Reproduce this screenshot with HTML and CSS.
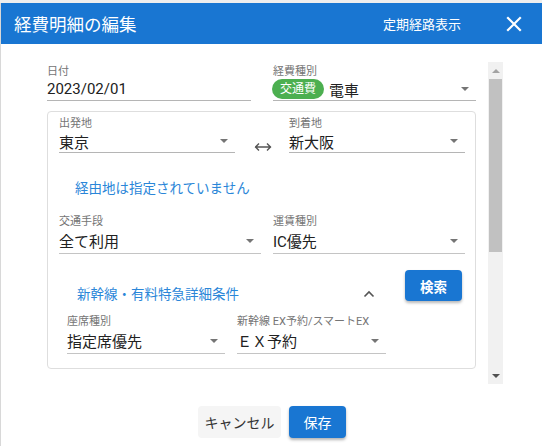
FILE: index.html
```html
<!DOCTYPE html>
<html lang="ja">
<head>
<meta charset="utf-8">
<title>経費明細の編集</title>
<link rel="stylesheet" href="styles.css">
</head>
<body>
<div class="dialog">
  <header class="dlg-head">
    <h1 class="dlg-title">経費明細の編集</h1>
    <div class="head-actions">
      <span class="head-link">定期経路表示</span>
      <svg class="close-icon" width="16" height="16" viewBox="0 0 16 16"><path d="M2 2 L14 14 M14 2 L2 14" stroke="#fff" stroke-width="2.2" fill="none" stroke-linecap="square"/></svg>
    </div>
  </header>
  <div class="dlg-body">
    <div class="scroll">
      <div class="content">
        <div class="row top-row">
          <div class="field w-date">
            <div class="label">日付</div>
            <div class="value">2023/02/01</div>
          </div>
          <div class="field w-type">
            <div class="label">経費種別</div>
            <div class="value select"><span class="chip">交通費</span><span class="chip-text">電車</span><span class="arrow"></span></div>
          </div>
        </div>

        <div class="card">
          <div class="row route-row">
            <div class="field w-route">
              <div class="label">出発地</div>
              <div class="value select"><span>東京</span><span class="arrow"></span></div>
            </div>
            <div class="swap">
              <svg width="18" height="10" viewBox="0 0 18 10"><path d="M1 5 H17 M5 1.5 L1.5 5 L5 8.5 M13 1.5 L16.5 5 L13 8.5" stroke="#555" stroke-width="1.4" fill="none"/></svg>
            </div>
            <div class="field w-route">
              <div class="label">到着地</div>
              <div class="value select"><span>新大阪</span><span class="arrow"></span></div>
            </div>
          </div>

          <div class="via">経由地は指定されていません</div>

          <div class="row mode-row">
            <div class="field w-mode">
              <div class="label">交通手段</div>
              <div class="value select tall"><span>全て利用</span><span class="arrow"></span></div>
            </div>
            <div class="field w-fare">
              <div class="label">運賃種別</div>
              <div class="value select tall"><span>IC優先</span><span class="arrow"></span></div>
            </div>
          </div>

          <div class="row express-row">
            <div class="express-head">
              <span class="express-title">新幹線・有料特急詳細条件</span>
              <svg class="caret" width="12" height="8" viewBox="0 0 12 8"><path d="M1.5 6.5 L6 2 L10.5 6.5" stroke="#555" stroke-width="1.6" fill="none"/></svg>
            </div>
            <button class="btn-search">検索</button>
          </div>

          <div class="row seat-row">
            <div class="field w-seat">
              <div class="label">座席種別</div>
              <div class="value select tall"><span>指定席優先</span><span class="arrow"></span></div>
            </div>
            <div class="field w-ex">
              <div class="label">新幹線 EX予約/スマートEX</div>
              <div class="value select tall"><span>ＥＸ予約</span><span class="arrow"></span></div>
            </div>
          </div>
        </div>
      </div>
      <div class="scrollbar">
        <div class="sb-btn"><span class="sb-up"></span></div>
        <div class="sb-thumb"></div>
        <div class="sb-track"></div>
        <div class="sb-btn"><span class="sb-down"></span></div>
      </div>
    </div>
    <div class="actions">
      <button class="btn-cancel">キャンセル</button>
      <button class="btn-save">保存</button>
    </div>
  </div>
</div>
</body>
</html>
```

FILE: styles.css
```css
* { box-sizing: border-box; }
html, body { margin: 0; padding: 0; }
body {
  width: 542px;
  height: 446px;
  overflow: hidden;
  background: #eeeeee;
  font-family: Roboto, "Noto Sans CJK JP", sans-serif;
  color: #212121;
}
.dialog {
  margin-top: 3px;
  height: 443px;
  background: #fff;
  border-left: 1px solid #d8d8d8;
}
.dlg-head {
  height: 41px;
  background: #1976d2;
  display: flex;
  align-items: center;
  justify-content: space-between;
  padding: 0 20px 0 13px;
  color: #fff;
}
.dlg-title {
  margin: 0;
  font-size: 17.5px;
  font-weight: 400;
  letter-spacing: 0;
}
.head-actions {
  display: flex;
  align-items: center;
}
.head-link {
  font-size: 13px;
}
.close-icon {
  margin-left: 45px;
  display: block;
}
.dlg-body {
  padding-top: 18px;
}
.scroll {
  display: flex;
  height: 322px;
  padding-left: 46px;
}
.content {
  width: 429px;
  padding-top: 3px;
}
.scrollbar {
  margin-left: 12px;
  width: 15px;
  height: 322px;
  background: #f1f1f1;
  display: flex;
  flex-direction: column;
}
.sb-btn {
  height: 17px;
  display: flex;
  align-items: center;
  justify-content: center;
}
.sb-up {
  width: 0; height: 0;
  border-left: 4px solid transparent;
  border-right: 4px solid transparent;
  border-bottom: 4px solid #a3a3a3;
}
.sb-down {
  width: 0; height: 0;
  border-left: 4px solid transparent;
  border-right: 4px solid transparent;
  border-top: 4px solid #505050;
}
.sb-thumb {
  height: 173px;
  background: #c1c1c1;
  margin: 0 1px;
}
.sb-track { flex: 1; }

.row { display: flex; }
.field { display: flex; flex-direction: column; }
.label {
  font-size: 11px;
  line-height: 13px;
  height: 13px;
  color: #757575;
}
.value {
  height: 23px;
  display: flex;
  align-items: center;
  font-size: 15px;
  border-bottom: 1px solid #b5b5b5;
  position: relative;
}
.value.tall { height: 26px; border-bottom-color: #c4c4c4; border-bottom-width: 1.5px; }
.select { padding-right: 20px; }
.arrow {
  position: absolute;
  right: 7px;
  top: 50%;
  margin-top: -2px;
  width: 0; height: 0;
  border-left: 4px solid transparent;
  border-right: 4px solid transparent;
  border-top: 4px solid #757575;
}
.top-row { gap: 22px; }
.w-date { width: 204px; }
.w-type { width: 203px; }
.chip {
  background: #4caf50;
  color: #fff;
  font-size: 12px;
  height: 20px;
  line-height: 20px;
  padding: 0 8px;
  border-radius: 10px;
  margin-left: -1px;
}
.chip-text { margin-left: 5px; }

.card {
  margin-top: 10px;
  border: 1px solid #dedede;
  border-radius: 4px;
  padding: 5px 10px 14px 11px;
}
.w-route { width: 176px; }
.swap {
  width: 54px;
  display: flex;
  justify-content: center;
  align-self: flex-end;
  padding-bottom: 1px;
  padding-left: 2px;
}
.swap svg { display: block; }
.via {
  margin-top: 25px;
  padding-left: 16px;
  font-size: 13.5px;
  line-height: 20px;
  color: #2a86d8;
}
.mode-row { margin-top: 17px; gap: 12px; }
.w-mode { width: 202px; }
.w-fare { width: 192px; }

.express-row {
  margin-top: 16px;
  align-items: flex-start;
}
.express-head {
  margin-top: 14px;
  padding-left: 18px;
  width: 327px;
  display: flex;
  align-items: center;
  justify-content: space-between;
  padding-right: 11px;
}
.express-title {
  font-size: 13.5px;
  line-height: 20px;
  color: #2a86d8;
}
.caret { display: block; }
.btn-search {
  margin-left: 19px;
  width: 57px;
  height: 31px;
  border: none;
  border-radius: 4px;
  background: #1976d2;
  color: #fff;
  font-family: Roboto, "Noto Sans CJK JP", sans-serif;
  font-size: 13.5px;
  font-weight: 700;
  box-shadow: 0 2px 3px rgba(0,0,0,0.28);
  padding: 0;
}
.seat-row {
  margin-top: 11px;
  padding-left: 8px;
  gap: 12px;
}
.w-seat { width: 158px; }
.w-ex { width: 149px; }

.actions {
  margin-top: 22px;
  display: flex;
  justify-content: center;
  gap: 8px;
  padding-left: 1px;
}
.actions button {
  height: 32px;
  border: none;
  border-radius: 4px;
  font-family: Roboto, "Noto Sans CJK JP", sans-serif;
  font-size: 14px;
  padding: 0;
}
.btn-cancel {
  width: 83px;
  background: #f5f5f5;
  color: #333;
}
.btn-save {
  width: 57px;
  background: #1976d2;
  color: #fff;
  box-shadow: 0 2px 3px rgba(0,0,0,0.3);
}
```
